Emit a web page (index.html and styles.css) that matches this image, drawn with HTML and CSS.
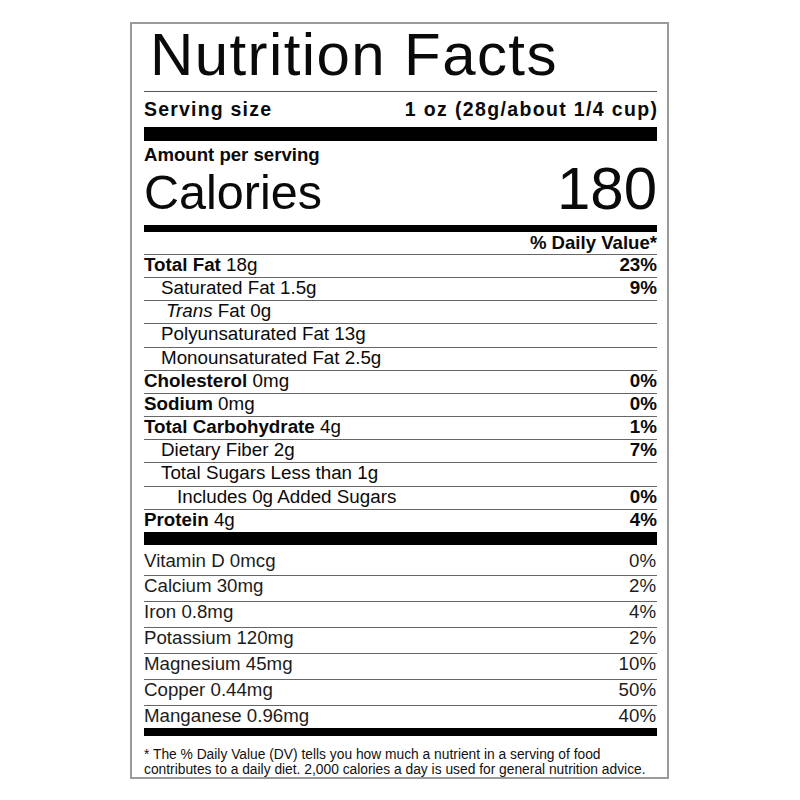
FILE: index.html
```html
<!DOCTYPE html>
<html lang="en">
<head>
<meta charset="utf-8">
<title>Nutrition Facts</title>
<link rel="stylesheet" href="styles.css">
</head>
<body>
<section class="label">
  <h1 class="title">Nutrition Facts</h1>
  <div class="serving"><span>Serving size</span><span>1 oz (28g/about 1/4 cup)</span></div>
  <div class="bar bar-lg"></div>
  <div class="amount">Amount per serving</div>
  <div class="calories"><span class="cal-label">Calories</span><span class="cal-value">180</span></div>
  <div class="bar bar-md"></div>
  <div class="dv-head">% Daily Value*</div>
  <ul class="nutrients">
    <li class="row"><span><b>Total Fat</b> 18g</span><b>23%</b></li>
    <li class="row sub"><span>Saturated Fat 1.5g</span><b>9%</b></li>
    <li class="row trans"><span><i>Trans</i> Fat 0g</span></li>
    <li class="row sub"><span>Polyunsaturated Fat 13g</span></li>
    <li class="row sub"><span>Monounsaturated Fat 2.5g</span></li>
    <li class="row"><span><b>Cholesterol</b> 0mg</span><b>0%</b></li>
    <li class="row"><span><b>Sodium</b> 0mg</span><b>0%</b></li>
    <li class="row"><span><b>Total Carbohydrate</b> 4g</span><b>1%</b></li>
    <li class="row sub"><span>Dietary Fiber 2g</span><b>7%</b></li>
    <li class="row sub"><span>Total Sugars Less than 1g</span></li>
    <li class="row added"><span>Includes 0g Added Sugars</span><b>0%</b></li>
    <li class="row"><span><b>Protein</b> 4g</span><b>4%</b></li>
  </ul>
  <div class="bar bar-lg2"></div>
  <ul class="vitamins">
    <li class="vrow first"><span>Vitamin D 0mcg</span><span>0%</span></li>
    <li class="vrow"><span>Calcium 30mg</span><span>2%</span></li>
    <li class="vrow"><span>Iron 0.8mg</span><span>4%</span></li>
    <li class="vrow"><span>Potassium 120mg</span><span>2%</span></li>
    <li class="vrow"><span>Magnesium 45mg</span><span>10%</span></li>
    <li class="vrow"><span>Copper 0.44mg</span><span>50%</span></li>
    <li class="vrow last"><span>Manganese 0.96mg</span><span>40%</span></li>
  </ul>
  <div class="bar bar-md2"></div>
  <p class="footnote">* The % Daily Value (DV) tells you how much a nutrient in a serving of food<br>contributes to a daily diet. 2,000 calories a day is used for general nutrition advice.</p>
</section>
</body>
</html>
```

FILE: styles.css
```css
* { box-sizing: border-box; }
html, body { margin: 0; padding: 0; background: #fff; }
body {
  font-family: "Liberation Sans", Arial, sans-serif;
  color: #0a0a0a;
}
.label {
  width: 539px;
  margin: 22px 0 0 130px;
  border: 2px solid #9a9a9a;
  padding: 0 10px 0 12px;
}
.title {
  margin: 0;
  padding: 0 0 5px 6px;
  font-size: 60px;
  font-weight: 400;
  line-height: 62px;
  letter-spacing: 1.4px;
  border-bottom: 1px solid #555;
  white-space: nowrap;
}
.serving {
  display: flex;
  justify-content: space-between;
  font-weight: 700;
  font-size: 19.5px;
  letter-spacing: 1.2px;
  line-height: 34px;
  height: 35px;
}
.serving span:last-child { letter-spacing: 1.35px; margin-right: -1.3px; }
.bar { background: #000; }
.bar-lg { height: 14px; }
.bar-md { height: 7px; }
.bar-lg2 { height: 13px; }
.bar-md2 { height: 8px; }
.amount {
  font-weight: 700;
  font-size: 18.6px;
  line-height: 20px;
  padding-top: 4px;
  height: 24px;
}
.calories {
  display: flex;
  justify-content: space-between;
  align-items: baseline;
  height: 60px;
}
.cal-label { font-size: 48.5px; line-height: 48px; }
.cal-value { font-size: 60px; line-height: 48px; }
.dv-head {
  text-align: right;
  font-weight: 700;
  font-size: 18.6px;
  line-height: 22px;
  height: 22px;
}
.nutrients, .vitamins { list-style: none; margin: 0; padding: 0; }
.row {
  display: flex;
  justify-content: space-between;
  border-top: 1px solid #666;
  font-size: 18.8px;
  line-height: 20px;
  height: 23.17px;
  padding-bottom: 2.17px;
  white-space: nowrap;
}
.row.sub span { padding-left: 17px; }
.row.trans span { padding-left: 22px; }
.row.added span { padding-left: 33px; }
.vrow {
  display: flex;
  justify-content: space-between;
  border-top: 1px solid #666;
  font-size: 18.7px;
  line-height: 20px;
  height: 26px;
  padding-bottom: 5px;
  color: #1c1c1c;
  white-space: nowrap;
}
.vrow span:last-child { margin-right: 1px; }
.vrow.first { border-top: 0; height: 30px; padding-top: 6px; padding-bottom: 4px; }
.vrow.last { height: 23px; padding-bottom: 2px; }
.footnote {
  margin: 0;
  padding-top: 11px;
  font-size: 13.8px;
  line-height: 15px;
  height: 41px;
  color: #111;
  white-space: nowrap;
}
```
